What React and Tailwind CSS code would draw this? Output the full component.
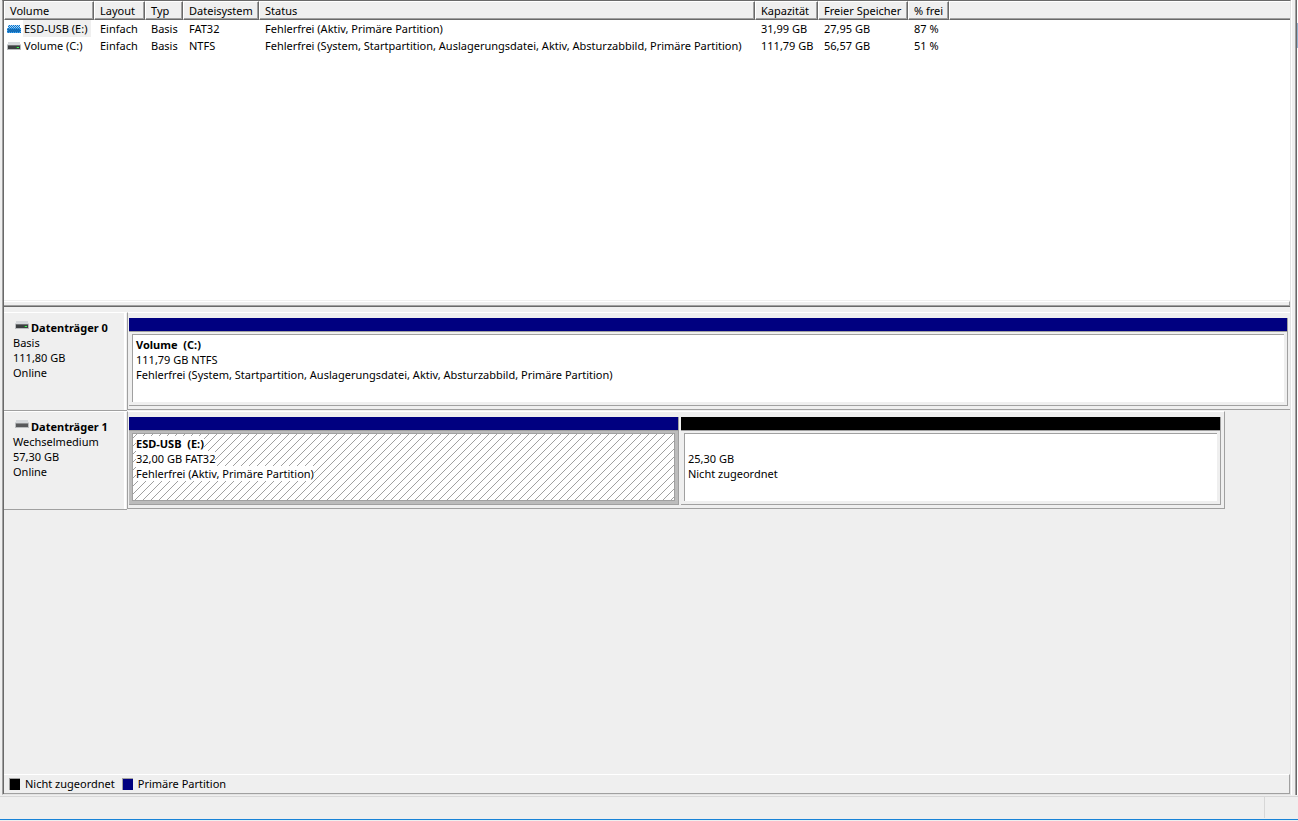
import React from "react";

const columns = [
  { label: "Volume", width: "w-[90px]" },
  { label: "Layout", width: "w-[51px]" },
  { label: "Typ", width: "w-[38px]" },
  { label: "Dateisystem", width: "w-[76px]" },
  { label: "Status", width: "w-[496px]" },
  { label: "Kapazität", width: "w-[63px]" },
  { label: "Freier Speicher", width: "w-[90px]" },
  { label: "% frei", width: "w-[41px]" },
];

const volumes = [
  {
    name: "ESD-USB (E:)",
    selected: true,
    cells: ["Einfach", "Basis", "FAT32", "Fehlerfrei (Aktiv, Primäre Partition)", "31,99 GB", "27,95 GB", "87 %"],
  },
  {
    name: "Volume (C:)",
    selected: false,
    cells: [
      "Einfach",
      "Basis",
      "NTFS",
      "Fehlerfrei (System, Startpartition, Auslagerungsdatei, Aktiv, Absturzabbild, Primäre Partition)",
      "111,79 GB",
      "56,57 GB",
      "51 %",
    ],
  },
];

function DriveIcon({ led = false }) {
  return (
    <svg width="14" height="8" viewBox="0 0 14 8" shapeRendering="crispEdges" className="shrink-0" aria-hidden="true">
      <path d="M1 0h12v2h1v2H0V2h1z" fill="#d5d8db" />
      <path d="M0 3h14v5H0z" fill="#b9bcbe" />
      <path d="M1 4h12v3H1z" fill={led ? "#3c3f41" : "#58595b"} />
      <path d="M1 3h12v1H1z" fill={led ? "#6f7274" : "#8e9092"} />
      {led && <path d="M9 5h3v1H9z" fill="#1f8a2c" />}
      {led && <path d="M10 5h2v1h-2z" fill="#3cf252" />}
    </svg>
  );
}

function SelectedDriveIcon() {
  return (
    <svg width="14" height="8" viewBox="0 0 14 8" shapeRendering="crispEdges" className="shrink-0" aria-hidden="true">
      <defs>
        <pattern id="dither" width="2" height="2" patternUnits="userSpaceOnUse">
          <path d="M0 0h1v1H0zM1 1h1v1H1z" fill="#0078d7" />
        </pattern>
      </defs>
      <path d="M1 0h12v4H1z" fill="#b4d2ec" />
      <path d="M0 3h14v5H0z" fill="#5ea5de" />
      <path d="M1 4h12v3H1z" fill="#2a659a" />
      <path d="M1 0h12v3h1v5H0V3h1z" fill="url(#dither)" />
    </svg>
  );
}

function VolumeTable() {
  return (
    <table className="w-full table-fixed border-collapse whitespace-nowrap text-left">
      <thead>
        <tr>
          {columns.map((c) => (
            <th key={c.label} scope="col" className={`${c.width} p-0 font-normal`}>
              <div className="h-[19px] border-t border-l border-r border-b border-t-white border-l-white border-r-[#696969] border-b-[#696969] bg-[#efefef] pl-[5px] leading-[17px] shadow-[inset_-1px_-1px_0_#a0a0a0]">
                {c.label}
              </div>
            </th>
          ))}
          <td className="p-0">
            <div className="h-[19px] border-t border-l border-b border-t-white border-l-white border-b-[#696969] bg-[#efefef] shadow-[inset_0_-1px_0_#a0a0a0]" />
          </td>
        </tr>
      </thead>
      <tbody>
        {volumes.map((v) => (
          <tr key={v.name} className="h-[17px] leading-[17px]">
            <td className="p-0">
              <div className="flex items-center pl-[3px]">
                {v.selected ? <SelectedDriveIcon /> : <DriveIcon led />}
                <span className={`ml-[2px] pl-px pr-1 ${v.selected ? "bg-[#efefef]" : ""}`}>{v.name}</span>
              </div>
            </td>
            {v.cells.map((text, i) => (
              <td key={i} className="p-0 pl-[6px]">
                {text}
              </td>
            ))}
            <td />
          </tr>
        ))}
      </tbody>
    </table>
  );
}

function DiskLabel({ name, kind, size, led }) {
  return (
    <div className="w-[123px] shrink-0 border-t border-b border-t-white border-b-[#a0a0a0]">
      <div className="h-full w-[122px] border-r-2 border-white pt-[7px] pl-[9px]">
        <div className="flex h-[15px] items-start gap-[2px] pl-[2px] font-bold">
          <span className="pt-px">
            <DriveIcon led={led} />
          </span>
          <h2>{name}</h2>
        </div>
        <p>{kind}</p>
        <p>{size}</p>
        <p>Online</p>
      </div>
    </div>
  );
}

function Hatch() {
  return (
    <svg className="absolute inset-0 h-full w-full" shapeRendering="crispEdges" aria-hidden="true">
      <defs>
        <pattern id="hatch" width="8" height="8" patternUnits="userSpaceOnUse" patternTransform="translate(4 0)">
          <path
            d="M7 0h1v1H7zM6 1h1v1H6zM5 2h1v1H5zM4 3h1v1H4zM3 4h1v1H3zM2 5h1v1H2zM1 6h1v1H1zM0 7h1v1H0z"
            fill="#a0a0a0"
          />
        </pattern>
      </defs>
      <rect width="100%" height="100%" fill="url(#hatch)" />
    </svg>
  );
}

function Partition({ title, lines, grow, bar, selected = false }) {
  return (
    <div className={`${grow} flex min-w-0 basis-0 flex-col border-r border-b border-[#a0a0a0] whitespace-nowrap`}>
      <div className={`h-[13px] ${bar}`} />
      <div className={`flex-1 border-t border-[#a0a0a0] px-[3px] pt-[2px] pb-[3px] ${selected ? "bg-[#bcbcbc]" : ""}`}>
        <div
          className={`relative h-[68px] overflow-hidden border-t border-l border-[#a0a0a0] bg-white pt-[2px] pl-[3px] ${selected ? "border-r border-b" : ""}`}
        >
          {selected && <Hatch />}
          <div className="relative">
            <h3 className="h-[15px] font-bold whitespace-pre">
              <span className="inline-block bg-white">{title}</span>
            </h3>
            {lines.map((l) => (
              <p key={l} className="h-[15px]">
                <span className="inline-block bg-white">{l}</span>
              </p>
            ))}
          </div>
        </div>
      </div>
    </div>
  );
}

function DiskRow({ label, width, children }) {
  return (
    <section className="flex h-[99px] leading-[15px]">
      <DiskLabel {...label} />
      <div className="min-w-0 flex-1">
        <div
          className={`${width} flex h-[98px] gap-[2px] border-t border-b border-l border-t-white border-r-[#a0a0a0] border-b-[#a0a0a0] border-l-[#a0a0a0] pt-[5px] pb-[3px] pl-px`}
        >
          {children}
        </div>
      </div>
    </section>
  );
}

function LegendItem({ color, text }) {
  return (
    <li className="flex items-center gap-[5px]">
      <span className={`h-3 w-[11px] border-t border-l border-[#a0a0a0] ${color}`} />
      {text}
    </li>
  );
}

export default function App() {
  return (
    <div className="flex min-h-screen flex-col bg-[#efefef] font-['Noto_Sans','Open_Sans',sans-serif] text-[11px] text-black">
      <div className="flex flex-1 pl-[2px]">
        <main className="flex min-w-0 flex-1 flex-col border-t border-r border-b border-l border-t-[#696969] border-r-[#e3e3e3] border-b-[#e3e3e3] border-l-[#a0a0a0]">
          <div className="flex flex-1 flex-col border-l border-[#696969]">
            <div className="h-[299px] overflow-hidden bg-white">
              <VolumeTable />
            </div>
            <div className="h-[7px] border-b border-[#696969] pt-px">
              <div className="h-[5px] border-t border-r border-b border-t-white border-r-[#a0a0a0] border-b-[#a0a0a0]" />
            </div>
            <div className="flex-1 pt-[5px]">
              <DiskRow
                label={{ name: "Datenträger 0", kind: "Basis", size: "111,80 GB", led: true }}
                width="w-full pr-[2px]"
              >
                <Partition
                  title="Volume  (C:)"
                  lines={[
                    "111,79 GB NTFS",
                    "Fehlerfrei (System, Startpartition, Auslagerungsdatei, Aktiv, Absturzabbild, Primäre Partition)",
                  ]}
                  grow="grow"
                  bar="bg-[#000080]"
                />
              </DiskRow>
              <DiskRow
                label={{ name: "Datenträger 1", kind: "Wechselmedium", size: "57,30 GB" }}
                width="w-[94.4%] border-r pr-[3px]"
              >
                <Partition
                  title="ESD-USB  (E:)"
                  lines={["32,00 GB FAT32", "Fehlerfrei (Aktiv, Primäre Partition)"]}
                  grow="grow-[550]"
                  bar="bg-[#000080]"
                  selected
                />
                <Partition title=" " lines={["25,30 GB", "Nicht zugeordnet"]} grow="grow-[540]" bar="bg-black" />
              </DiskRow>
            </div>
            <ul className="flex h-5 items-center gap-[7px] border-t border-r border-b border-t-white border-r-[#a0a0a0] border-b-[#a0a0a0] pl-[5px]">
              <LegendItem color="bg-black" text="Nicht zugeordnet" />
              <LegendItem color="bg-[#000080]" text="Primäre Partition" />
            </ul>
          </div>
        </main>
        <div className="flex w-[7px] justify-end border-l border-white">
          <div className="w-px bg-[#a0a0a0]" />
          <div className="w-px bg-[#696969]" />
          <div className="w-px bg-white pt-[23px]">
            <div className="h-[25px] bg-[#99b4d1]" />
          </div>
        </div>
      </div>
      <footer className="mt-px flex h-6 justify-end border-t border-b border-t-[#d7d7d7] border-b-[#1883d7] pr-[33px]">
        <div className="mb-px border-l border-[#d7d7d7]" />
      </footer>
      <div className="h-px" />
    </div>
  );
}
